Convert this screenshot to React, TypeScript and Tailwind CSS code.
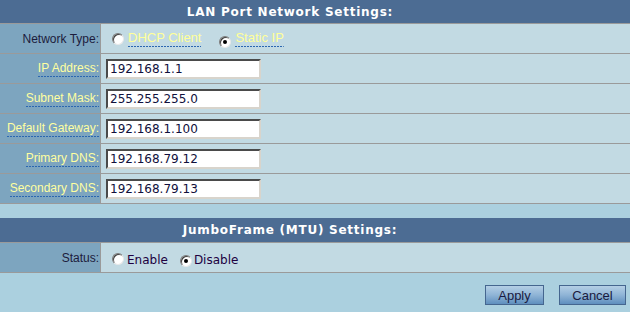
const fields = [
  { label: "IP Address:", value: "192.168.1.1" },
  { label: "Subnet Mask:", value: "255.255.255.0" },
  { label: "Default Gateway:", value: "192.168.1.100" },
  { label: "Primary DNS:", value: "192.168.79.12" },
  { label: "Secondary DNS:", value: "192.168.79.13" },
];

const dotted =
  "pb-[2px] bg-[image:repeating-linear-gradient(to_right,#2a66b0_0_2px,transparent_2px_3px)] bg-no-repeat bg-bottom bg-[length:100%_1px]";

function Radio({ checked }: { checked?: boolean }) {
  return (
    <span className="inline-flex items-center justify-center w-[12px] h-[12px] rounded-full bg-white border border-t-[#7a7a7a] border-l-[#7a7a7a] border-b-[#e8e8e8] border-r-[#e8e8e8] shadow-[inset_1px_1px_0_#404040]">
      {checked && <span className="w-[4px] h-[4px] rounded-full bg-black" />}
    </span>
  );
}

function Header({ title, h }: { title: string; h: string }) {
  return (
    <div
      className={`${h} flex items-center justify-center pr-[50px] bg-[#4c6c93] border-b border-[#9a9a9a] text-white font-bold text-[12px] tracking-[0.75px] font-['DejaVu_Sans',sans-serif]`}
    >
      {title}
    </div>
  );
}

function Row({ label, plain, children }: { label: string; plain?: boolean; children: React.ReactNode }) {
  return (
    <div className="flex h-[30px] border-b border-[#9a9a9a]">
      <div className="w-[101px] shrink-0 flex items-center justify-end pr-[1px] bg-[#7da5bf] border-r border-[#9a9a9a]">
        {plain ? (
          <span className="text-[12px] leading-[14px] text-[#1c1c3c]">{label}</span>
        ) : (
          <span className={`text-[12px] leading-[14px] text-[#ffffa0] ${dotted}`}>{label}</span>
        )}
      </div>
      <div className="flex-1 flex items-center bg-[#c2dae3]">{children}</div>
    </div>
  );
}

export default function App() {
  return (
    <div className="w-[630px] h-[312px] overflow-hidden bg-[#abd0df] font-['Liberation_Sans',Arial,sans-serif]">
      <Header title="LAN Port Network Settings:" h="h-[24px]" />

      <Row label="Network Type:" plain>
        <div className="flex items-center pl-[11px] pt-[1px]">
          <Radio />
          <span className={`ml-[4px] text-[13px] leading-[14px] text-[#ffff99] ${dotted}`}>DHCP Client</span>
          <span className="ml-[18px]">
            <Radio checked />
          </span>
          <span className={`ml-[4px] text-[13px] leading-[14px] text-[#ffff99] ${dotted}`}>Static IP</span>
        </div>
      </Row>

      {fields.map((f) => (
        <Row key={f.label} label={f.label}>
          <input
            readOnly
            value={f.value}
            className="ml-[5px] mt-[1px] w-[155px] h-[20px] px-[2px] bg-white border-2 border-t-[#4a4a4a] border-l-[#4a4a4a] border-b-[#d8d4cc] border-r-[#d8d4cc] text-[12px] text-[#10103c] font-['DejaVu_Sans',sans-serif] outline-none"
          />
        </Row>
      ))}

      <div className="h-[14px]" />

      <Header title="JumboFrame (MTU) Settings:" h="h-[25px]" />

      <Row label="Status:" plain>
        <div className="flex items-center pl-[11px] pt-[2px] text-[12px] text-[#200040] font-['DejaVu_Sans',sans-serif]">
          <Radio />
          <span className="ml-[3px] mt-[3px]">Enable</span>
          <span className="ml-[12px]">
            <Radio checked />
          </span>
          <span className="ml-[2px] mt-[3px]">Disable</span>
        </div>
      </Row>

      <div className="flex justify-end gap-[15px] pr-[4px] pt-[12px]">
        <button className="w-[59px] h-[20px] border border-[#45668f] bg-gradient-to-b from-[#b4cfe5] via-[#8fb4d6] to-[#5f8fbe] text-[13px] leading-none text-[#1a1a40]">
          Apply
        </button>
        <button className="w-[67px] h-[20px] border border-[#45668f] bg-gradient-to-b from-[#b4cfe5] via-[#8fb4d6] to-[#5f8fbe] text-[13px] leading-none text-[#1a1a40]">
          Cancel
        </button>
      </div>
    </div>
  );
}
